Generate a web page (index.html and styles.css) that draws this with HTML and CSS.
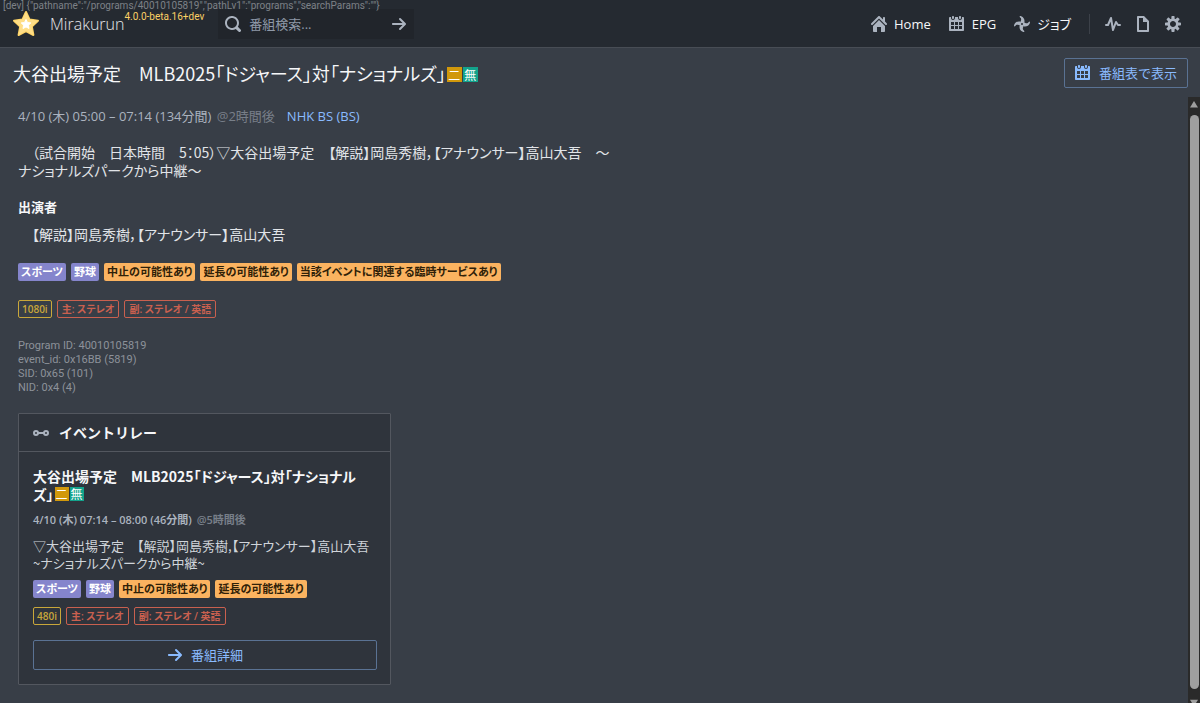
FILE: index.html
```html
<!DOCTYPE html>
<html lang="ja">
<head>
    <meta charset="utf-8">
    <title>Mirakurun</title>
    <link rel="stylesheet" href="styles.css">
</head>
<body>
    <svg class="sprite" aria-hidden="true">
        <symbol id="calendar" viewBox="0 0 16 16"><path d="M11 3c.6 0 1-.5 1-1V1c0-.6-.4-1-1-1s-1 .4-1 1v1c0 .5.4 1 1 1zm3-2h-1v1c0 1.1-.9 2-2 2s-2-.9-2-2V1H6v1c0 1.1-.9 2-2 2s-2-.9-2-2V1H1c-.6 0-1 .5-1 1v12c0 .6.4 1 1 1h13c.6 0 1-.4 1-1V2c0-.6-.5-1-1-1zM5 13H2v-3h3v3zm0-4H2V6h3v3zm4 4H6v-3h3v3zm0-4H6V6h3v3zm4 4h-3v-3h3v3zm0-4h-3V6h3v3zM4 3c.6 0 1-.5 1-1V1c0-.6-.4-1-1-1S3 .4 3 1v1c0 .5.4 1 1 1z"/></symbol>
        <symbol id="arrow" viewBox="0 0 16 16"><path d="M14.7 7.29l-5-5a.965.965 0 00-.71-.3 1.003 1.003 0 00-.71 1.71l3.29 3.29H1.99c-.55 0-1 .45-1 1s.45 1 1 1h9.59l-3.29 3.29a1.003 1.003 0 001.42 1.42l5-5c.18-.18.29-.43.29-.71s-.12-.52-.3-.7z"/></symbol>
    </svg>

    <div class="debug">[dev] {"pathname":"/programs/40010105819","pathLv1":"programs","searchParams":""}</div>

    <header class="navbar">
        <a class="brand" href="#">
            <svg class="logo" viewBox="0 0 28 28">
                <path fill="#ffd566" stroke="#ffd566" stroke-width="2" stroke-linejoin="round" d="M14 2l3.600 7.600 8.400 1.100-6.200 5.800 1.600 8.500L14 21l-7.400 4 1.600-8.500L2 10.700l8.400-1.100z"/>
                <path fill="#ffe8a8" d="M14 2l3.600 7.600L14 14l-3.600-4.400zM26 10.700l-6.200 5.800L14 14l3.600-4.400zM21.400 25L14 21v-7l5.800 2.500zM6.600 25l1.600-8.500L14 14v7zM2 10.700l8.400-1.100L14 14l-5.800 2.500z" opacity=".5"/>
                <path fill="#fff" stroke="#fff" stroke-linejoin="round" d="M14 9.500l1.500 3 3.300.4-2.400 2.300.6 3.300-3-1.600-3 1.600.6-3.300-2.400-2.300 3.300-.4z"/>
            </svg>
            <span class="name">Mirakurun</span>
            <span class="version">4.0.0-beta.16+dev</span>
        </a>
        <form class="search">
            <svg class="icon" viewBox="0 0 16 16"><path d="M15.550 13.430l-2.670-2.680a6.940 6.940 0 001.110-3.760c0-3.870-3.130-7-7-7s-7 3.130-7 7 3.130 7 7 7c1.390 0 2.680-.42 3.760-1.110l2.680 2.670a1.498 1.498 0 102.120-2.120zm-8.560-1.440c-2.760 0-5-2.240-5-5s2.240-5 5-5 5 2.240 5 5-2.240 5-5 5z"/></svg>
            <input type="text" placeholder="番組検索..." aria-label="番組検索">
            <button type="button" aria-label="検索"><svg class="icon"><use href="#arrow"/></svg></button>
        </form>
        <nav class="menu">
            <a href="#"><svg class="icon" viewBox="0 0 16 16"><path d="M2 10v5c0 .55.45 1 1 1h3v-5h4v5h3c.55 0 1-.45 1-1v-5L8 4l-6 6zm13.710-2.710L14 5.590V2c0-.55-.45-1-1-1s-1 .45-1 1v1.590L8.710.29C8.530.11 8.280 0 8 0s-.53.11-.71.29l-7 7a1.003 1.003 0 001.420 1.420L8 2.410l6.290 6.290c.18.19.43.3.71.3a1.003 1.003 0 00.71-1.710z"/></svg>Home</a>
            <a href="#"><svg class="icon"><use href="#calendar"/></svg>EPG</a>
            <a href="#"><svg class="icon" viewBox="0 0 16 16">
                <g id="blade"><path d="M5.600.5C5.800-.1 6.500-.1 7.200.2 9.900 1.300 11 3.600 10.300 6.800L9 7 8 8 7 8C6.300 7 6.400 6 6.900 4.700 7.500 3 7 2 5.900 1.300z"/></g>
                <use href="#blade" transform="rotate(90 8 8)"/>
                <use href="#blade" transform="rotate(180 8 8)"/>
                <use href="#blade" transform="rotate(270 8 8)"/>
                <circle class="hub" cx="8" cy="8" r="1"/>
            </svg>ジョブ</a>
            <span class="divider"></span>
            <button type="button" aria-label="ステータス"><svg class="icon" viewBox="0 0 16 16"><path class="line" d="M1 9h2L6 2l2 12 3-8 2 3h2"/></svg></button>
            <button type="button" aria-label="ログ"><svg class="icon" viewBox="0 0 16 16"><path d="M9 0H3c-.55 0-1 .45-1 1v14c0 .55.45 1 1 1h10c.55 0 1-.45 1-1V5L9 0zm3 14H4V2h4v4h4v8z"/></svg></button>
            <button type="button" aria-label="設定"><svg class="icon" viewBox="0 0 16 16"><path d="M15.190 6.390h-1.850c-.11-.37-.27-.71-.45-1.040l1.360-1.360c.31-.31.31-.82 0-1.130l-1.130-1.130a.803.803 0 00-1.130 0l-1.360 1.360c-.33-.17-.67-.33-1.040-.44V.79c0-.44-.36-.8-.8-.8h-1.600c-.44 0-.8.36-.8.8v1.860c-.39.12-.75.28-1.100.47l-1.300-1.300c-.3-.3-.79-.3-1.090 0L1.820 2.910c-.3.3-.3.79 0 1.090l1.300 1.300c-.2.34-.36.7-.48 1.090H.79c-.44 0-.8.36-.8.8v1.600c0 .44.36.8.8.8h1.850c.11.37.27.71.45 1.040l-1.360 1.360c-.31.31-.31.82 0 1.130l1.130 1.130c.31.31.82.31 1.130 0l1.360-1.360c.33.18.67.33 1.040.44v1.860c0 .44.36.8.8.8h1.600c.44 0 .8-.36.8-.8v-1.860c.39-.12.75-.28 1.100-.47l1.300 1.300c.3.3.79.3 1.090 0l1.090-1.090c.3-.3.3-.79 0-1.090l-1.300-1.300c.19-.35.36-.71.48-1.100h1.850c.44 0 .8-.36.8-.8v-1.600a.816.816 0 00-.81-.79zm-7.200 4.600c-1.660 0-3-1.340-3-3s1.340-3 3-3 3 1.340 3 3-1.340 3-3 3z"/></svg></button>
        </nav>
    </header>

    <div class="titlebar">
        <h1 class="kana">大谷出場予定　MLB2025「ドジャース」対「ナショナルズ」<span class="mark bilingual">二</span><span class="mark free">無</span></h1>
        <button class="outlined" type="button"><svg class="icon"><use href="#calendar"/></svg>番組表で表示</button>
    </div>

    <div class="view">
        <main class="content">
            <p class="time">4/10 (木) 05:00 – 07:14 (134分間) <span class="ago">@2時間後</span><a href="#">NHK BS (BS)</a></p>
            <p class="text kana">　（試合開始　日本時間　5：05）▽大谷出場予定　【解説】岡島秀樹，【アナウンサー】高山大吾　～<br>ナショナルズパークから中継～</p>
            <h2>出演者</h2>
            <p class="text kana">　【解説】岡島秀樹，【アナウンサー】高山大吾</p>
            <div class="tags genres">
                <span class="tag genre">スポーツ</span>
                <span class="tag genre">野球</span>
                <span class="tag notice">中止の可能性あり</span>
                <span class="tag notice">延長の可能性あり</span>
                <span class="tag notice">当該イベントに関連する臨時サービスあり</span>
            </div>
            <div class="tags formats">
                <span class="tag video">1080i</span>
                <span class="tag audio">主: ステレオ</span>
                <span class="tag audio">副: ステレオ / 英語</span>
            </div>
            <div class="ids">
                <div>Program ID: 40010105819</div>
                <div>event_id: 0x16BB (5819)</div>
                <div>SID: 0x65 (101)</div>
                <div>NID: 0x4 (4)</div>
            </div>

            <section class="card">
                <h3><svg class="icon" viewBox="0 0 16 16"><g fill="none" stroke="currentColor" stroke-width="2"><circle cx="3" cy="8" r="2"/><circle cx="13" cy="8" r="2"/><path d="M5 8h6"/></g></svg>イベントリレー</h3>
                <div class="card-body">
                    <h4 class="kana">大谷出場予定　MLB2025「ドジャース」対「ナショナル<br>ズ」<span class="mark bilingual">二</span><span class="mark free">無</span></h4>
                    <p class="when">4/10 (木) 07:14 – 08:00 (46分間) <span class="ago">@5時間後</span></p>
                    <p class="summary kana">▽大谷出場予定　【解説】岡島秀樹,【アナウンサー】高山大吾<br>~ナショナルズパークから中継~</p>
                    <div class="tags">
                        <span class="tag genre">スポーツ</span>
                        <span class="tag genre">野球</span>
                        <span class="tag notice">中止の可能性あり</span>
                        <span class="tag notice">延長の可能性あり</span>
                    </div>
                    <div class="tags">
                        <span class="tag video">480i</span>
                        <span class="tag audio">主: ステレオ</span>
                        <span class="tag audio">副: ステレオ / 英語</span>
                    </div>
                    <button class="outlined detail" type="button"><svg class="icon"><use href="#arrow"/></svg>番組詳細</button>
                </div>
            </section>
        </main>
        <div class="scrollbar" aria-hidden="true">
            <svg viewBox="0 0 12 10"><path d="M6 0l5 8H1z"/></svg>
            <div class="thumb"></div>
            <svg class="down" viewBox="0 0 12 10"><path d="M6 9L1 1h10z"/></svg>
        </div>
    </div>
</body>
</html>
```
FILE: styles.css
```css
* {
    box-sizing: border-box;
}

body {
    margin: 0;
    height: 100vh;
    display: flex;
    flex-direction: column;
    overflow: hidden;
    background: #383e47;
    color: #f6f7f9;
    font-family: "Open Sans", "Noto Sans CJK JP", sans-serif;
    font-size: 13px;
    line-height: 18px;
}

h1, h2, h3, h4, p {
    margin: 0;
}

a {
    color: #8abbff;
    text-decoration: none;
}

button {
    border: 0;
    padding: 0;
    background: none;
    color: inherit;
    font: inherit;
    cursor: pointer;
}

.sprite {
    display: none;
}

.icon {
    width: 16px;
    height: 16px;
    flex: none;
    fill: currentColor;
    color: #abb3bf;
}

.line {
    fill: none;
    stroke: currentColor;
    stroke-width: 2;
    stroke-linecap: round;
    stroke-linejoin: round;
}

.hub {
    fill: #252a31;
}

.kana {
    font-family: "Noto Sans CJK JP", sans-serif;
    font-feature-settings: "palt";
}

.debug {
    position: absolute;
    top: 0;
    left: 3px;
    color: #7d8187;
    font-family: Roboto, sans-serif;
    font-size: 10px;
    line-height: 11px;
}

/* navbar */

.navbar {
    height: 48px;
    flex: none;
    display: flex;
    align-items: center;
    padding: 0 19px 0 12px;
    background: #252a31;
    border-bottom: 1px solid #484d55;
}

.brand {
    display: flex;
    align-items: center;
    color: #e5e8eb;
}

.logo {
    width: 28px;
    height: 28px;
    margin-right: 10px;
}

.name {
    font-size: 16px;
    font-weight: 300;
}

.version {
    align-self: flex-start;
    color: #fbd065;
    font-family: Roboto, sans-serif;
    font-size: 10px;
    line-height: 14px;
}

.search {
    width: 196px;
    height: 30px;
    margin-left: 14px;
    padding: 0 7px;
    display: flex;
    align-items: center;
    gap: 8px;
    background: #21252b;
}

.search input {
    flex: 1;
    min-width: 0;
    padding: 0;
    border: 0;
    outline: 0;
    background: none;
    color: #f6f7f9;
    font: inherit;
}

.search input::placeholder {
    color: #8f99a8;
}

.search button,
.menu button {
    display: flex;
}

.menu {
    margin-left: auto;
    display: flex;
    align-items: center;
    gap: 14px;
    font-feature-settings: "palt";
}

.menu a {
    display: flex;
    align-items: center;
    gap: 7px;
    margin-right: 4px;
    color: #f6f7f9;
}

.divider {
    width: 1px;
    height: 20px;
    margin-right: 1px;
    background: #3c4149;
}

/* program title */

.titlebar {
    height: 49px;
    flex: none;
    display: flex;
    align-items: center;
    justify-content: space-between;
    padding: 0 12px 0 13px;
}

h1 {
    font-size: 18px;
    font-weight: 400;
    line-height: 24px;
}

.mark {
    display: inline-block;
    width: 14px;
    height: 14px;
    margin-left: 1px;
    color: #fff;
    font-size: 12px;
    font-weight: 400;
    line-height: 14px;
    text-align: center;
    vertical-align: 1px;
}

h1 .mark {
    width: 15px;
    height: 15px;
    line-height: 15px;
}

.bilingual {
    background: #d1980b;
}

.free {
    background: #13a38c;
}

.outlined {
    height: 30px;
    display: flex;
    align-items: center;
    justify-content: center;
    gap: 8px;
    padding: 0 10px;
    border: 1px solid #5a7293;
    border-radius: 2px;
    color: #8abbff;
}

.outlined .icon {
    color: inherit;
}

/* content */

.view {
    flex: 1;
    min-height: 0;
    display: flex;
}

.content {
    flex: 1;
    min-width: 0;
    padding: 10px 18px;
    overflow: hidden;
}

.time {
    color: #abb3bf;
    margin-bottom: 18px;
}

.time a {
    margin-left: 12px;
}

.ago {
    margin-left: 2px;
    color: #787f89;
}

.text {
    color: #e1e4e8;
    font-size: 14px;
}

h2 {
    margin: 19px 0 9px;
    font-size: 13px;
    line-height: 18px;
}

.tags {
    display: flex;
    flex-wrap: wrap;
    gap: 5px;
}

.genres {
    margin-top: 20px;
}

.formats {
    margin: 19px 0 21px;
}

.tag {
    height: 18px;
    padding: 0 3px;
    border-radius: 2px;
    font-family: "Open Sans", "Noto Sans CJK JP", sans-serif;
    font-feature-settings: "palt";
    font-size: 11px;
    font-weight: 600;
    line-height: 18px;
}

.genre {
    background: #8585cc;
    color: #fff;
}

.notice {
    background: #fbb360;
    color: #2f2108;
}

.video,
.audio {
    border: 1px solid;
    font-size: 10px;
    line-height: 16px;
}

.video {
    color: #c9a73a;
}

.audio {
    padding: 0 4px;
    color: #c9604f;
}

.ids {
    color: #8d929a;
    font-family: Roboto, sans-serif;
    font-size: 11px;
    line-height: 14px;
}

/* event relay card */

.card {
    width: 373px;
    max-width: 100%;
    margin-top: 18px;
    background: #2f343c;
    border: 1px solid #53575f;
    border-radius: 1px;
}

h3 {
    height: 38px;
    display: flex;
    align-items: center;
    gap: 10px;
    padding: 0 14px;
    border-bottom: 1px solid #53575f;
    font-size: 14px;
}

.card-body {
    display: flex;
    flex-direction: column;
    gap: 9px;
    padding: 15px 13px 14px 14px;
}

h4 {
    font-size: 14px;
    line-height: 18px;
}

.when {
    color: #abb3bf;
    font-size: 11px;
    font-weight: 600;
    line-height: 16px;
}

.summary {
    color: #d0d4da;
    font-size: 13px;
    line-height: 17px;
}

.detail {
    width: 100%;
    margin-top: 6px;
}

/* scrollbar */

.scrollbar {
    width: 12px;
    display: flex;
    flex-direction: column;
    gap: 6px;
    padding-top: 4px;
    background: #2a2a2a;
    fill: #9f9f9f;
}

.scrollbar svg {
    height: 8px;
    flex: none;
}

.scrollbar .down {
    margin: 4px 0 -4px;
}

.thumb {
    flex: 1;
    margin: 0 1px 0 2px;
    border-radius: 5px;
    background: #9f9f9f;
}
```
